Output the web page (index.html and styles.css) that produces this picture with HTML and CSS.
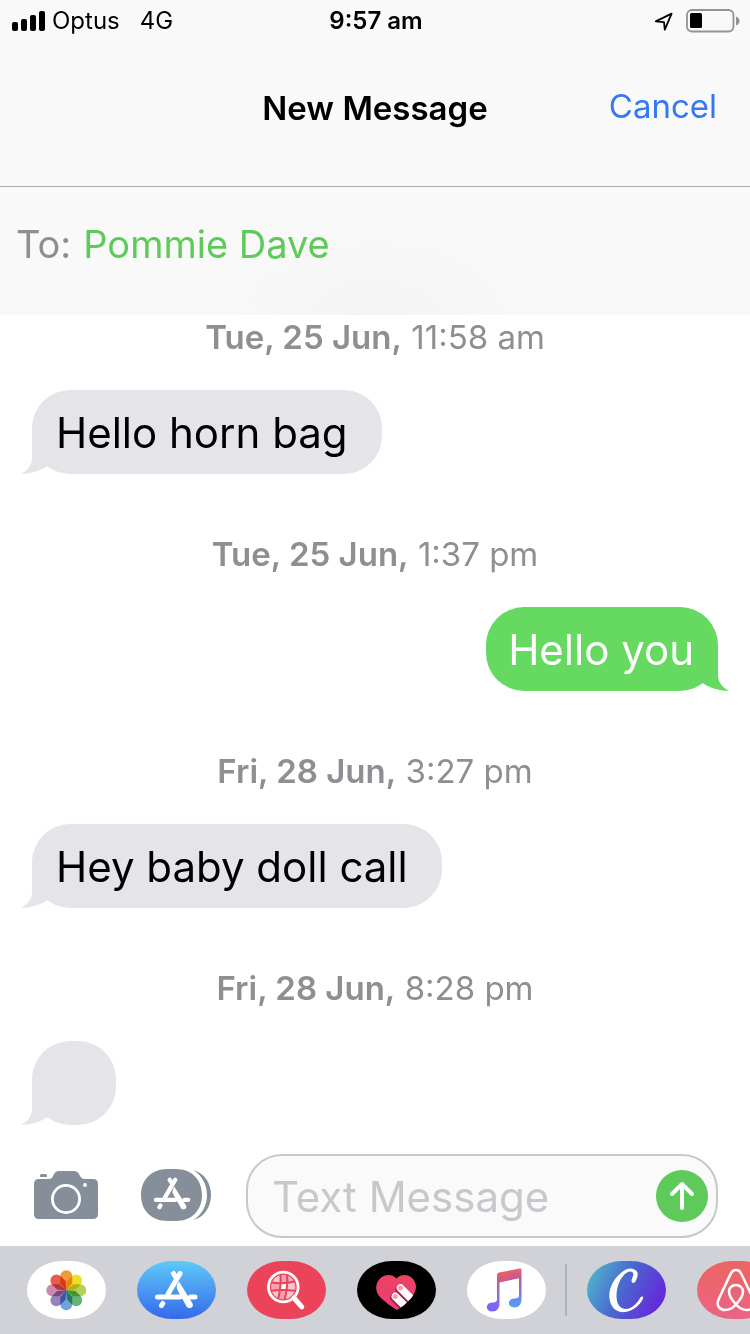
FILE: index.html
```html
<!DOCTYPE html>
<html lang="en">
<head>
<meta charset="utf-8">
<meta name="viewport" content="width=device-width, initial-scale=1">
<title>New Message</title>
<link rel="stylesheet" href="styles.css">
</head>
<body>
<div class="screen">
  <div class="status-bar">
    <div class="status-left">
      <svg class="signal" width="33" height="20" viewBox="0 0 33 20" aria-hidden="true"><rect x="0" y="11" width="6" height="9" rx="2"/><rect x="9" y="8" width="6" height="12" rx="2"/><rect x="18" y="4" width="6" height="16" rx="2"/><rect x="27" y="0" width="6" height="20" rx="2"/></svg>
      <span class="carrier">Optus</span>
      <span>4G</span>
    </div>
    <time class="clock">9:57 am</time>
    <div class="status-right">
      <svg width="20" height="20" viewBox="0 0 20 20" aria-hidden="true"><path d="M1.8 10.4 17.6 2.6 10.8 18.6 10 11.2Z" fill="none" stroke="#000" stroke-width="1.8" stroke-linejoin="round"/></svg>
      <svg width="54" height="24" viewBox="0 0 54 24" aria-hidden="true"><rect x="1" y="1" width="46.500" height="21.500" rx="5" fill="none" stroke="#939393" stroke-width="1.800"/><rect x="4" y="4" width="12" height="15" rx="1.500"/><path d="M50 7.500q3.500 1.500 3.500 4.500t-3.500 4.500z" fill="#939393"/></svg>
    </div>
  </div>

  <header class="nav">
    <h1 class="nav-title">New Message</h1>
    <button class="cancel" type="button">Cancel</button>
  </header>

  <div class="recipient">
    <label for="to">To:</label>
    <input id="to" type="text" value="Pommie Dave">
  </div>

  <main class="thread">
    <p class="stamp"><b>Tue, 25 Jun,</b> 11:58 am</p>
    <div class="bubble received"><svg class="tail" viewBox="0 0 32 42" aria-hidden="true"><path d="M11 0V26C11 33 7 38 0 42C10 42 18 39 25 35L32 30V0Z"/></svg><p>Hello horn bag</p></div>
    <p class="stamp"><b>Tue, 25 Jun,</b> 1:37 pm</p>
    <div class="bubble sent"><svg class="tail" viewBox="0 0 32 42" aria-hidden="true"><path d="M21 0V26C21 33 25 38 32 42C22 42 14 39 7 35L0 30V0Z"/></svg><p>Hello you</p></div>
    <p class="stamp"><b>Fri, 28 Jun,</b> 3:27 pm</p>
    <div class="bubble received"><svg class="tail" viewBox="0 0 32 42" aria-hidden="true"><path d="M11 0V26C11 33 7 38 0 42C10 42 18 39 25 35L32 30V0Z"/></svg><p>Hey baby doll call</p></div>
    <p class="stamp"><b>Fri, 28 Jun,</b> 8:28 pm</p>
    <div class="bubble received"><svg class="tail" viewBox="0 0 32 42" aria-hidden="true"><path d="M11 0V26C11 33 7 38 0 42C10 42 18 39 25 35L32 30V0Z"/></svg></div>
  </main>

  <form class="compose">
    <button class="tool" type="button" aria-label="Camera">
      <svg width="64" height="48" viewBox="0 0 64 48"><path fill="#868e99" d="M5 8H15Q18 8 19 5L20 3Q21.500 0 25 0H40Q43.500 0 45 3L46 5Q47.500 8 50 8H59Q64 8 64 13V43Q64 48 59 48H5Q0 48 0 43V13Q0 8 5 8ZM6 6V4.500Q6 3 7.500 3H11.500Q13 3 13 4.500V6Z"/><circle cx="32" cy="28" r="13.600" fill="none" stroke="#fff" stroke-width="2.800"/><circle cx="51" cy="14" r="1.900" fill="#fff"/></svg>
    </button>
    <button class="tool" type="button" aria-label="Apps">
      <svg width="70" height="52" viewBox="0 0 70 52"><path fill="#868e99" d="M27 0H35C51 0 61 11 61 26S51 52 35 52H27C10 52 0 41 0 26S10 0 27 0ZM52 1C64 4 70 15 70 26S64 48 52 51C61 46 66 36 66 26S61 6 52 1Z"/><g class="store-mark" transform="translate(-2.700 0) scale(.86)"><path d="M20.500 36H43M53.500 36H58M43 12.500 31 33M36.500 12.500 39 16.500M25.800 42.500 24.500 44.500"/><path class="leg" d="M42 20.500C39 24 39.500 27 41 30L49 44.500C51 49 57.500 47 55.500 42.500Z"/></g></svg>
    </button>
    <div class="field">
      <input type="text" placeholder="Text Message" aria-label="Text Message">
      <button class="send" type="submit" aria-label="Send"><svg width="52" height="52" viewBox="0 0 52 52"><path d="M26 38V14M16 24 26 14 36 24" fill="none" stroke="#fff" stroke-width="4" stroke-linecap="round" stroke-linejoin="round"/></svg></button>
    </div>
  </form>

  <nav class="apps" aria-label="iMessage apps">
    <div class="app-group">
      <button class="app photos" type="button" aria-label="Photos"><svg viewBox="0 0 79 58"><g class="petals" transform="translate(39.300 29.300)"><path fill="#f09a37" d="M-6-14a6 6 0 0 1 12 0V-7L0 0-6-7Z"/><path fill="#f0e02c" transform="rotate(45)" d="M-6-14a6 6 0 0 1 12 0V-7L0 0-6-7Z"/><path fill="#b5d054" transform="rotate(90)" d="M-6-14a6 6 0 0 1 12 0V-7L0 0-6-7Z"/><path fill="#63b578" transform="rotate(135)" d="M-6-14a6 6 0 0 1 12 0V-7L0 0-6-7Z"/><path fill="#6ba5dc" transform="rotate(180)" d="M-6-14a6 6 0 0 1 12 0V-7L0 0-6-7Z"/><path fill="#9882bd" transform="rotate(225)" d="M-6-14a6 6 0 0 1 12 0V-7L0 0-6-7Z"/><path fill="#cd88ad" transform="rotate(270)" d="M-6-14a6 6 0 0 1 12 0V-7L0 0-6-7Z"/><path fill="#e65c4d" transform="rotate(315)" d="M-6-14a6 6 0 0 1 12 0V-7L0 0-6-7Z"/></g></svg></button>
      <button class="app store" type="button" aria-label="App Store"><svg viewBox="0 0 79 58"><g class="store-mark"><path d="M20.500 36H43M53.500 36H58M43 12.500 31 33M36.500 12.500 39 16.500M25.800 42.500 24.500 44.500"/><path class="leg" d="M42 20.500C39 24 39.500 27 41 30L49 44.500C51 49 57.500 47 55.500 42.500Z"/></g></svg></button>
      <button class="app images" type="button" aria-label="#images"><svg viewBox="0 0 79 58"><circle cx="36.300" cy="26" r="13" fill="#f7a3b0"/><path fill="#fff" d="M34 22.500H39.500L38.500 29H33Z"/><path fill="#f9c5cd" d="M25 30H32L31 37Q26 34 25 30ZM39 30H47Q45 36 39 38ZM40 22H47V29H39ZM28 16 33 14V21H26Z"/><path fill="none" stroke="#eb445a" stroke-width="2" d="M23 21Q36 24 49 20M23 30Q36 28 49 30M33.500 13Q34.500 24 31 39M40 13Q41 26 37.500 39"/><circle cx="36.300" cy="26" r="13" fill="none" stroke="#eb445a" stroke-width="1.500"/><circle cx="36.300" cy="26" r="14.800" fill="none" stroke="#fff" stroke-width="2.800"/><path d="M47 37 54.800 45.800" stroke="#fff" stroke-width="5" stroke-linecap="round"/></svg></button>
      <button class="app touch" type="button" aria-label="Digital Touch"><svg viewBox="0 0 79 58"><defs><clipPath id="heart"><path d="M39.500 17.500C44 12.500 52 13 56 18C61 24 59 31 55 36C51 41 44 47 40 49C36 47 28 41 23 36C18 31 18 23 22.500 18C27 13 35 12.500 39.500 17.500Z"/></clipPath><linearGradient id="heart-fill" x2="0" y2="1"><stop stop-color="#ea4461"/><stop offset="1" stop-color="#ee3b78"/></linearGradient></defs><g clip-path="url(#heart)"><path fill="url(#heart-fill)" d="M18 13H60V50H18Z"/><path d="M42.500 28.500 60 46M37 36.500 54 53.500" stroke="#a9294c" stroke-width="8.500" stroke-linecap="round"/><path d="M43.500 27 60 43.500M38.300 35.500 55 52" stroke="#fff" stroke-width="7.500" stroke-linecap="round"/></g><circle cx="43.500" cy="27" r="2.500" fill="#f2a0ae"/><circle cx="38.300" cy="35.500" r="2.500" fill="#f2a0ae"/></svg></button>
      <button class="app music" type="button" aria-label="Music"><svg viewBox="0 0 79 58"><defs><linearGradient id="note-l" x2="0" y2="1"><stop stop-color="#f0615e"/><stop offset=".25" stop-color="#cf5a86"/><stop offset=".6" stop-color="#8f6af0"/><stop offset="1" stop-color="#7c62f6"/></linearGradient><linearGradient id="note-r" x2="0" y2="1"><stop stop-color="#f0616c"/><stop offset=".25" stop-color="#bd5c91"/><stop offset=".6" stop-color="#7a78e4"/><stop offset="1" stop-color="#57a1f5"/></linearGradient></defs><path fill="url(#note-l)" d="M30 14Q30 12 32 11.600L43 9.400V19.200L32.500 21.400V42C32.500 47 30 50.500 25.500 50.500C18 50.500 18 42 25 41.500C28.500 41.200 30 41 30 38Z"/><path fill="url(#note-r)" d="M42.500 9.500 52.500 7.400Q54.500 7 54.500 9V38C54.500 43 52 46.500 47.500 46.500C40 46.500 40 38 47 37.500C50.500 37.200 52 37 52 34V17.300L42.500 19.300Z"/></svg></button>
    </div>
    <div class="app-group recent">
      <button class="app canva" type="button" aria-label="Canva"><svg viewBox="0 0 79 58"><path fill="#fff" d="M48.500 20.500C50 17 52 13 49.500 10C46.500 6.500 40.500 6.500 35 11C27 17 21 28 22.500 38C24 48 31 52 38 51C46 50 53 44 55.800 38C57 35 54.500 34.500 53 37C50 43 44 48 39 48C33 48 29.500 43 29.500 35C29.500 25 34 15 40 11.500C44 9.500 47.500 11 46 15C45.500 17 44.500 18 44.500 20C44.500 22.300 47.500 22.500 48.500 20.500Z"/></svg></button>
      <button class="app airbnb" type="button" aria-label="Airbnb"><svg viewBox="0 0 79 58"><path fill="none" stroke="#fff" stroke-width="2.500" d="M39 43.500C34 38 32 34 32 30.500C32 27 35 24 39 24S46 27 46 30.500C46 34 44 38 39 43.500C35 48 31.500 49 28 49C23 49 19.500 45 21 40C22.500 36 33 14 34.500 11.500C36.500 8 41.500 8 43.500 11.500C45 14 55.500 36 57 40C58.500 45 55 49 50 49C46.500 49 43 48 39 43.500Z"/></svg></button>
    </div>
  </nav>
</div>
</body>
</html>
```

FILE: styles.css
```css
* {
  box-sizing: border-box;
}

body {
  margin: 0;
  background: #fff;
  color: #000;
  font-family: Inter, "Liberation Sans", sans-serif;
}

h1,
p {
  margin: 0;
}

button,
input {
  margin: 0;
  padding: 0;
  border: 0;
  background: none;
  color: inherit;
  font: inherit;
}

svg {
  display: block;
}

.screen {
  display: flex;
  flex-direction: column;
  min-height: 100vh;
  overflow: hidden;
}

/* Status bar */
.status-bar {
  display: grid;
  grid-template-columns: 1fr auto 1fr;
  align-items: center;
  height: 40px;
  padding: 1px 10px 0 12px;
  background: #f9f9f9;
  font-size: 24px;
}

.status-left,
.status-right {
  display: flex;
  align-items: center;
}

.carrier {
  margin: 0 20px 0 7px;
}

.clock {
  font-weight: 600;
}

.status-right {
  justify-content: flex-end;
  gap: 12px;
}

/* Title bar */
.nav {
  display: grid;
  grid-template-columns: 1fr auto 1fr;
  align-items: center;
  padding: 38px 33px 49px;
  border-bottom: 1px solid #acacac;
  background: #f9f9f9;
}

.nav-title {
  grid-column: 2;
  padding-top: 2px;
  font-size: 33px;
  font-weight: 600;
  line-height: 57px;
}

.cancel {
  justify-self: end;
  padding-bottom: 4px;
  color: #3478f6;
  font-size: 33px;
}

.recipient {
  display: flex;
  align-items: center;
  gap: 12px;
  height: 128px;
  padding: 0 16px;
  padding-bottom: 15px;
  background: radial-gradient(ellipse 180px 100px at 50% 100%, #f4f4f5, #f9f9f9);
  color: #8e8e93;
  font-size: 38px;
}

.recipient input {
  flex: 1;
  min-width: 0;
  color: #5dca5a;
}

/* Conversation */
.thread {
  display: flex;
  flex: 1;
  flex-direction: column;
  padding: 2px 32px 21px;
}

.stamp {
  margin-bottom: 33px;
  color: #8e8e93;
  font-size: 33px;
  line-height: 40px;
  text-align: center;
}

.stamp b {
  font-weight: 600;
}

.bubble {
  position: relative;
  min-width: 84px;
  height: 84px;
  border-radius: 38px;
  font-size: 42px;
  line-height: 86px;
}

.bubble + .stamp {
  margin-top: 60px;
}

.received {
  align-self: flex-start;
  padding: 0 34px 0 24px;
  background: #e5e4e9;
}

.sent {
  align-self: flex-end;
  padding: 0 24px 0 22px;
  background: #65d960;
  color: #fff;
}

.tail {
  position: absolute;
  bottom: 0;
  width: 32px;
  height: 42px;
}

.received .tail {
  left: -11px;
  fill: #e5e4e9;
}

.sent .tail {
  right: -11px;
  fill: #65d960;
}

.bubble p {
  position: relative;
  white-space: nowrap;
}

/* Message entry */
.compose {
  display: flex;
  align-items: center;
  padding: 8px 32px 8px 34px;
}

.tool {
  flex: none;
  padding-bottom: 2px;
}

.tool + .tool {
  margin: 0 35px 0 43px;
}

.field {
  display: flex;
  flex: 1;
  align-items: center;
  min-width: 0;
  height: 84px;
  padding: 0 8px 0 24px;
  border: 2px solid #c7c7cc;
  border-radius: 36px;
  background: #fafafa;
  font-size: 42px;
}

.field input {
  flex: 1;
  min-width: 0;
  outline: 0;
}

.field input::placeholder {
  color: #c7c7cc;
}

.send {
  flex: none;
  border-radius: 50%;
  background: #5dca5a;
}

/* App drawer */
.apps {
  display: flex;
  gap: 19px;
  padding: 15px 0 15px 27px;
  background: #d1d2d7;
}

.app-group {
  display: flex;
  flex: none;
  gap: 31px;
}

.recent::before {
  width: 2px;
  margin: 3px -11px 3px 0;
  background: #b2b3b8;
  content: "";
}

.app {
  flex: none;
  width: 79px;
  height: 58px;
  overflow: hidden;
  border-radius: 35px / 29px;
}

.app svg {
  width: 79px;
  height: 58px;
}

.photos,
.music {
  background: #fff;
}

.petals path {
  mix-blend-mode: multiply;
}

.store {
  background: linear-gradient(#5fc9f8, #3569ea);
}

.store-mark {
  fill: none;
  stroke: #fff;
  stroke-linecap: round;
  stroke-width: 5;
}

.store-mark .leg {
  fill: #fff;
  stroke: none;
}

.images {
  background: #eb445a;
}

.touch {
  background: #000;
}

.canva {
  background: linear-gradient(115deg, #4fb8cb 5%, #4a68d0 45%, #6528da 88%);
}

.airbnb {
  background: linear-gradient(#ec6562, #eb6484);
}
```
